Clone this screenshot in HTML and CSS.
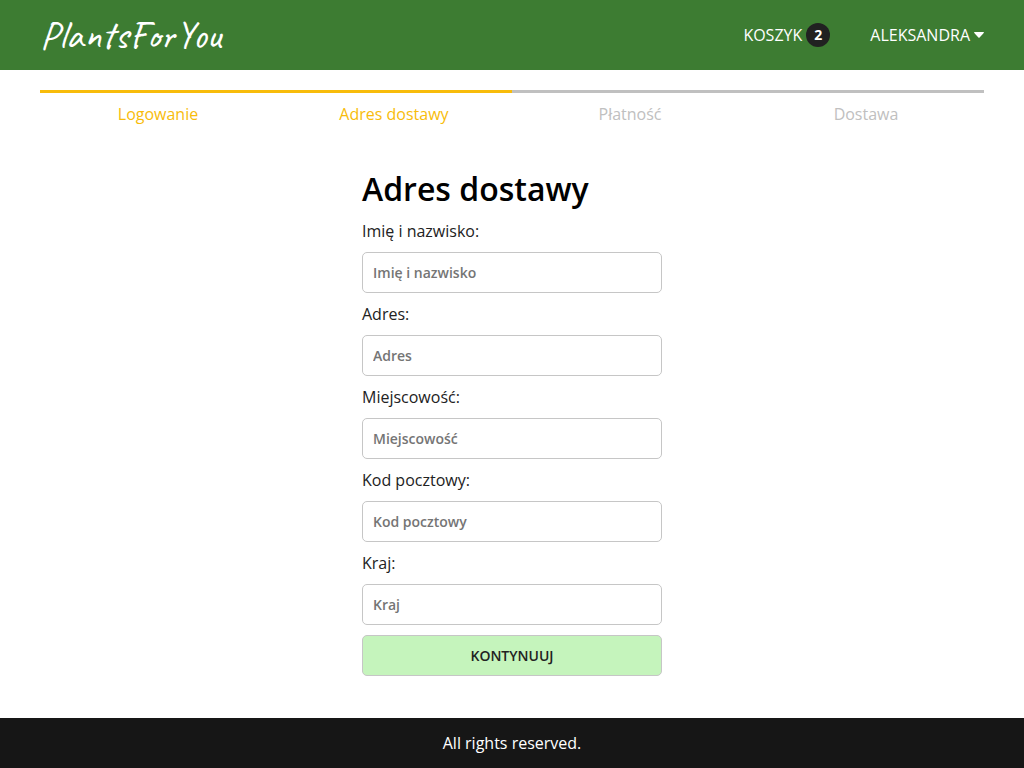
FILE: index.html
```html
<!DOCTYPE html>
<html lang="pl">
<head>
<meta charset="utf-8">
<meta name="viewport" content="width=device-width, initial-scale=1">
<title>PlantsForYou</title>
<link rel="stylesheet" href="styles.css">
</head>
<body>
<header class="header">
  <a class="brand" href="#">PlantsForYou</a>
  <nav class="nav">
    <a class="nav-link" href="#">KOSZYK <span class="badge">2</span></a>
    <button class="nav-link" type="button">ALEKSANDRA
      <svg class="caret" viewBox="0 0 10 6" aria-hidden="true"><path d="M.6 0h8.8q.9.3.3 1L5.6 5.5q-.6.6-1.2 0L.3 1Q-.3.3.6 0z"/></svg>
    </button>
  </nav>
</header>
<main class="main">
  <ol class="steps">
    <li class="step active">Logowanie</li>
    <li class="step active">Adres dostawy</li>
    <li class="step">Płatność</li>
    <li class="step">Dostawa</li>
  </ol>
  <form class="form">
    <h1 class="title">Adres dostawy</h1>
    <label class="label" for="name">Imię i nazwisko:</label>
    <input class="input" id="name" type="text" placeholder="Imię i nazwisko">
    <label class="label" for="address">Adres:</label>
    <input class="input" id="address" type="text" placeholder="Adres">
    <label class="label" for="city">Miejscowość:</label>
    <input class="input" id="city" type="text" placeholder="Miejscowość">
    <label class="label" for="zip">Kod pocztowy:</label>
    <input class="input" id="zip" type="text" placeholder="Kod pocztowy">
    <label class="label" for="country">Kraj:</label>
    <input class="input" id="country" type="text" placeholder="Kraj">
    <button class="submit" type="submit">KONTYNUUJ</button>
  </form>
</main>
<footer class="footer">All rights reserved.</footer>
</body>
</html>
```
FILE: styles.css
```css
* { box-sizing: border-box; }
body {
  margin: 0;
  min-height: 100vh;
  display: flex;
  flex-direction: column;
  font-family: "Open Sans", sans-serif;
  font-size: 16px;
  line-height: 22px;
  color: #000;
  background: #fff;
}
.header {
  display: flex;
  align-items: center;
  justify-content: space-between;
  min-height: 70px;
  padding: 0 40px;
  background: #3d7c32;
}
.brand {
  font-family: Caveat, cursive;
  font-size: 40px;
  font-weight: 500;
  line-height: 50px;
  color: #fff;
  text-decoration: none;
}
.nav { display: flex; gap: 40px; }
.nav-link {
  display: flex;
  align-items: center;
  gap: 4px;
  padding: 0;
  border: 0;
  background: none;
  font: inherit;
  font-weight: 500;
  color: #fff;
  text-decoration: none;
}
.badge {
  width: 24px;
  height: 24px;
  border-radius: 50%;
  background: #212121;
  font-size: 14px;
  font-weight: 700;
  line-height: 24px;
  text-align: center;
}
.caret { width: 10px; height: 6px; fill: #fff; }
.main { flex: 1; padding: 20px 40px; }
.steps {
  display: flex;
  margin: 0 0 32px;
  padding: 0;
  list-style: none;
}
.step {
  flex: 1;
  padding: 10px 0;
  border-top: 3px solid #c0c0c0;
  text-align: center;
  color: #c0c0c0;
}
.step.active { border-color: #f8bc0b; color: #f8bc0b; }
.form {
  display: flex;
  flex-direction: column;
  max-width: 300px;
  margin: 0 auto;
}
.title {
  margin: 0 0 9px;
  font-size: 32px;
  font-weight: 600;
  line-height: 44px;
}
.label { margin-bottom: 10px; color: #222; }
.input, .submit {
  width: 100%;
  height: 41px;
  margin: 0 0 10px;
  padding: 10px;
  border: 1px solid #c6c6c6;
  border-radius: 5px;
  font-family: inherit;
  font-size: 14px;
  font-weight: 600;
  line-height: 19px;
}
.input { background: #fff; }
.input::placeholder { color: #757575; }
.submit { background: #c5f4bc; color: #222; cursor: pointer; }
.footer {
  padding: 14px;
  background: #161616;
  color: #fff;
  font-weight: 500;
  text-align: center;
}
```
